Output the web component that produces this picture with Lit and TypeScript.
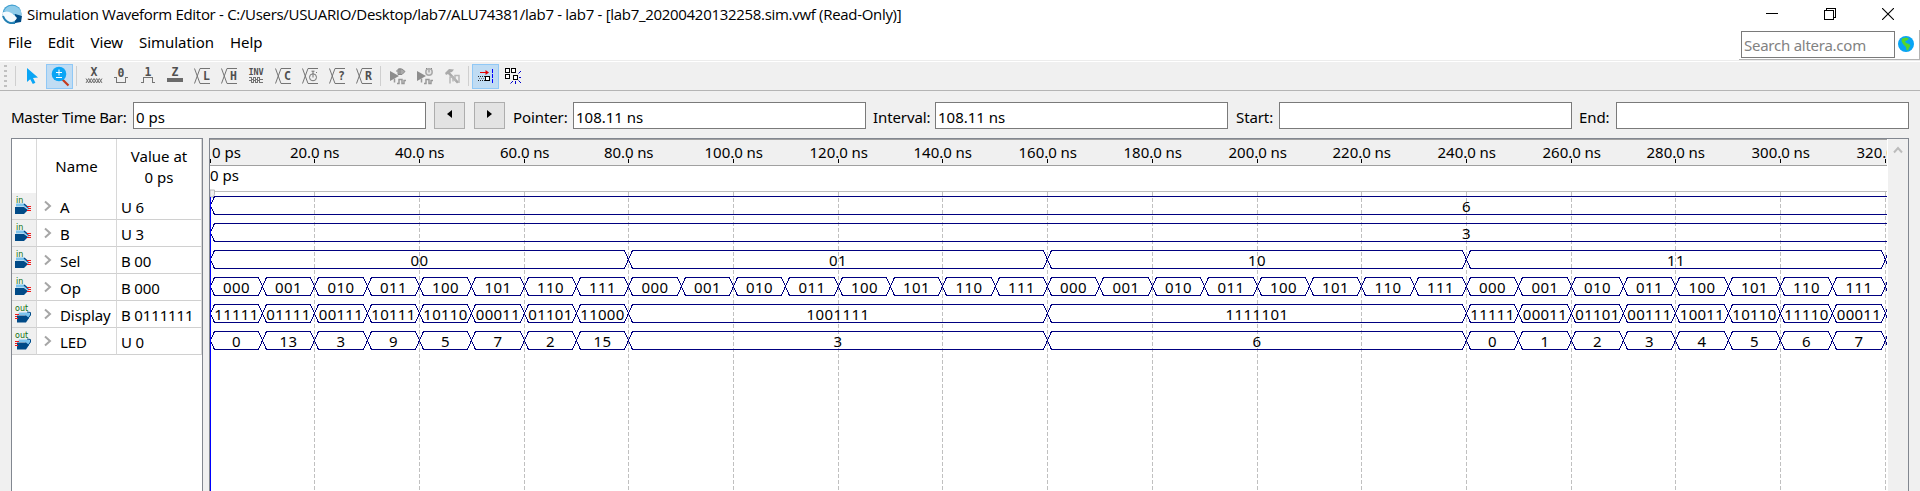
import { LitElement, html, svg, css } from "lit";
import { customElement, property } from "lit/decorators.js";

const STEP = 52.35;
const px = (k: number) => Math.floor(k * STEP);
const bits = ["000", "001", "010", "011", "100", "101", "110", "111"];

type Seg = [number, number, string];
interface Signal { name: string; value: string; dir: "in" | "out"; segs: Seg[]; }
const unit = (start: number, labels: string[]): Seg[] => labels.map((l, i) => [start + i, start + i + 1, l]);

const signals: Signal[] = [
  { name: "A", value: "U 6", dir: "in", segs: [[0, 48, "6"]] },
  { name: "B", value: "U 3", dir: "in", segs: [[0, 48, "3"]] },
  { name: "Sel", value: "B 00", dir: "in", segs: [[0, 8, "00"], [8, 16, "01"], [16, 24, "10"], [24, 32, "11"]] },
  { name: "Op", value: "B 000", dir: "in", segs: unit(0, [...bits, ...bits, ...bits, ...bits]) },
  {
    name: "Display", value: "B 0111111", dir: "out", segs: [
      ...unit(0, ["11111", "01111", "00111", "10111", "10110", "00011", "01101", "11000"]),
      [8, 16, "1001111"], [16, 24, "1111101"],
      ...unit(24, ["11111", "00011", "01101", "00111", "10011", "10110", "11110", "00011"])],
  },
  {
    name: "LED", value: "U 0", dir: "out", segs: [
      ...unit(0, ["0", "13", "3", "9", "5", "7", "2", "15"]),
      [8, 16, "3"], [16, 24, "6"],
      ...unit(24, ["0", "1", "2", "3", "4", "5", "6", "7"])],
  },
];

const bus = svg`<path class="ln" d="M.5 .5 L6 15.5 H16 M.5 15.5 L6 .5 H16"/>`;
const letter = (c: string) => svg`${bus}<text class="g" x="12.4" y="12.2" text-anchor="middle">${c}</text>`;
const play = svg`<path d="M0 3 L9 8 L0 13Z" fill="#8d8d8d"/><path d="M4.5 14.5 V10.5 M7 15.5 H9 V11.5 H12 V15.5 H14 V12.5 H16" fill="none" stroke="#999" stroke-width="1.5"/>`;

const icons: Record<string, unknown> = {
  pointer: svg`<path d="M3 0 V14 L6.2 11.2 L8.8 16 L11.4 14.7 L9 10 L14 9.6Z" fill="#0aa5f5"/>`,
  zoom: svg`<path d="M10 11 L16.5 17.5" stroke="#c43a1c" stroke-width="2.2"/><circle cx="7" cy="6" r="7.3" fill="#0aa5f5"/><path d="M4 4.5 H10 M7 1.5 V7.5 M4 9.5 H10" stroke="#fff" stroke-width="1" fill="none"/>`,
  x: svg`<text class="g" x="8" y="8" text-anchor="middle">X</text><path class="ln" d="M0 10.5 L2.7 15 L5.3 10.5 L8 15 L10.7 10.5 L13.3 15 L16 10.5 M0 15 L2.7 10.5 L5.3 15 L8 10.5 L10.7 15 L13.3 10.5 L16 15"/>`,
  zero: svg`<text class="g" x="8" y="9" text-anchor="middle">0</text><path class="ln c" d="M1 9.5 H3.5 V14.5 H12.5 V9.5 H15"/>`,
  one: svg`<text class="g" x="8" y="8" text-anchor="middle">1</text><path class="ln c" d="M1 14.5 H3.5 V9.5 H12.5 V14.5 H15"/>`,
  z: svg`<text class="g" x="8" y="8" text-anchor="middle">Z</text><rect x="0" y="10" width="16" height="4" fill="#6b6b6b"/>`,
  l: letter("L"), h: letter("H"), c: letter("C"), q: letter("?"), r: letter("R"),
  inv: svg`<text class="g s" x="8" y="6.5" text-anchor="middle" textLength="15">INV</text><path class="ln c" d="M1 9.5 H3.5 V11.5 H5.5 V9.5 H7.5 V11.5 H9.5 V9.5 H11.5 V11.5 H14.5 M1 12.5 H3.5 V14.5 H5.5 V12.5 H7.5 V14.5 H9.5 V12.5 H11.5 V14.5 H14.5"/>`,
  clock: svg`${bus}<circle cx="11" cy="9.3" r="3.5" class="ln"/><path class="ln" d="M9.5 3.2 H12.5 M11 3 V9.5 M14 5 L15 4"/>`,
  play1: svg`${play}<path d="M6 3 H8 M8 1 H12 L15 3.5 L12 6.5 H8Z M10 0 V6" fill="#aaa" stroke="#888"/>`,
  play2: svg`${play}<circle cx="12" cy="4" r="3.2" fill="#e6e6e6" stroke="#aaa" stroke-width="1.5"/><path d="M12 1.5 V4.5 M9 0 L10 1 M15 0 L14 1" stroke="#888"/>`,
  hammer: svg`<path d="M1 5 L5 1 L10 1.5 L8 4 L6 4.5 L15 14 L13 15.5 L4 6 L2 7Z" fill="#aaa"/><path d="M6 15.5 V9 H9 V13.5 M11 13 V7.5 H15 V15" fill="none" stroke="#b8b8b8" stroke-width="1.5"/>`,
  snap: svg`<path class="c" d="M2 4.5 H9" stroke="#e00000"/><path d="M7.5 2 L11 4.5 L7.5 7Z" fill="#e00000"/><path class="c" d="M0 8.5 H8 M0 12.5 H8" stroke="#222" stroke-dasharray="1 1"/><path class="c" d="M1 10.5 H8" stroke="#777" stroke-dasharray="1 1"/><rect class="c" x="7.5" y="8.5" width="4" height="4" fill="#fff" stroke="#000"/><path class="c" d="M14.5 1 V16" stroke="#00f" stroke-dasharray="4 1"/>`,
  grid: svg`<path class="c" d="M.5 .5 H4.5 V4.5 H.5Z M6.5 .5 H10.5 V4.5 H6.5Z M.5 6.5 H4.5 V10.5 H.5Z M8.5 7.5 H12.5 V11.5 H8.5Z" fill="#fff" stroke="#000"/><path d="M16 3 L13.5 5.5 M14 9.5 H16 M13.5 12.5 L16 15 M10.5 13 V16 M5.5 15.5 L8 13" stroke="#00c" fill="none"/>`,
};

@customElement("tool-icon")
class ToolIcon extends LitElement {
  @property() name = "";
  @property({ type: Boolean, reflect: true }) active = false;
  static styles = css`
    :host { box-sizing: border-box; display: flex; width: 27px; height: 25px; align-items: center; justify-content: center; border: 1px solid transparent; }
    :host([active]) { background: #c0dcf3; border-color: #90c8f6; }
    svg { display: block; width: 16px; height: 16px; overflow: visible; }
    .ln { fill: none; stroke: #747474; stroke-width: 1; }
    .c { shape-rendering: crispEdges; }
    .g { font: bold 11.5px "DejaVu Sans Mono", monospace; fill: #505050; }
    .s { font-size: 8.5px; }
  `;
  render() { return html`<svg viewBox="0 0 16 16">${icons[this.name]}</svg>`; }
}

@customElement("signal-list")
class SignalList extends LitElement {
  static styles = css`
    :host { box-sizing: border-box; display: block; width: 192px; background: #fff; border: solid #828790; border-width: 1px 1px 0; }
    .row { display: grid; grid-template-columns: 25px 80px 85px; height: 27px; }
    .head { height: 54px; line-height: 21px; text-align: center; }
    .row > div { box-sizing: border-box; border-right: 1px solid #d8d8d8; display: flex; align-items: center; white-space: nowrap; }
    .row:not(.head) > div { border-bottom: 1px solid #d0d0d0; }
    .head > div { justify-content: center; }
    .icon { background: #f0f0f0; padding-left: 3px; }
    .name { gap: 8px; padding-left: 7px; }
    .val { padding-left: 4px; }
    .row .hv, .row .hn { padding-top: 1px; }
    .pin { font: 8px "DejaVu Sans", sans-serif; fill: #107010; }
    svg { overflow: visible; display: block; }
    .t { padding-top: 1px; letter-spacing: -.08px; }
    .val .t { letter-spacing: -.15px; }
  `;
  pin(dir: string) {
    return dir === "in"
      ? svg`<text class="pin" x="1" y="5">in</text><path d="M1 5.5 H9 L14 9.5 V12 L9 8.5 H1Z" fill="#7cc4ee"/><path d="M0 9 H9 L13 12 L9 16 H0Z" fill="#004a87"/><path d="M9 6 L13 9.5" stroke="#004a87" stroke-width="1.3"/><path d="M12 8.5 H16 M13 10.5 H16 M12 12.5 H16" stroke="#f01818"/>`
      : svg`<text class="pin" x="0" y="5">out</text><path d="M4 6.5 H14 L16 9 L13 13 L10 9 H3Z" fill="#7cc4ee"/><path d="M2 9.5 H11 L14 12 L11 16.5 H2Z" fill="#004a87"/><path d="M12 6 L15.5 6.5 L15.5 9 L12.5 13" stroke="#004a87" fill="none"/><path d="M0 8.5 H4 M0 10.5 H2 M0 12.5 H3" stroke="#f01818"/>`;
  }
  render() {
    return html`
      <div class="row head"><div></div><div class="hn">Name</div><div class="hv">Value at<br>0 ps</div></div>
      ${signals.map(s => html`<div class="row">
        <div class="icon"><svg width="16" height="17">${this.pin(s.dir)}</svg></div>
        <div class="name"><svg width="8" height="11"><path d="M1 .5 L6 5 L1 9.5" fill="none" stroke="#a6a6a6" stroke-width="2"/></svg><span class="t">${s.name}</span></div>
        <div class="val"><span class="t">${s.value}</span></div>
      </div>`)}`;
  }
}

@customElement("wave-view")
class WaveView extends LitElement {
  static styles = css`
    :host { box-sizing: border-box; display: flex; flex: 1; background: #fff; border: solid #828790; border-width: 1px 1px 0; min-width: 0; }
    svg { display: block; flex: 1; }
    .bar { width: 20px; background: #f0f0f0; display: flex; justify-content: center; padding-top: 7px; }
    .bar svg { flex: none; }
    .crisp { shape-rendering: crispEdges; }
    .wave { fill: none; stroke: #000080; shape-rendering: crispEdges; }
    .grid { stroke: #c0c0c0; stroke-dasharray: 4 2; shape-rendering: crispEdges; }
    text { font-size: 15px; fill: #000; }
  `;
  wave(s: Signal, i: number) {
    const y = 57.5 + i * 27, b = y + 18;
    return s.segs.map(([from, to, label]) => {
      const l = px(from) + .5, r = px(to) + .5, long = label.length === 5;
      const w = label.length * 9 - (long ? 1 : .5);
      return svg`
        <path class="wave" d="M${l} ${y + 9} L${l + 4} ${y} H${r - 4} L${r} ${y + 9} L${r - 4} ${b} H${l + 4} Z"/>
        <text x=${(l + r) / 2 - .2} y=${y + 15.7} text-anchor="middle" textLength=${w}>${label}</text>`;
    });
  }
  render() {
    const ticks = Array.from({ length: 17 }, (_, i) => i);
    return html`
      <svg width="1678" height="352" viewBox="0 0 1678 352">
        <defs><clipPath id="plot"><rect width="1677" height="352"/></clipPath></defs>
        <g clip-path="url(#plot)">
          <rect width="1677" height="26" fill="#f0f0f0"/>
          <path class="crisp" d="M0 .5 H1677 M0 26.5 H1677" stroke="#a0a0a0"/>
          <path class="crisp" d="M4 52.5 H1677" stroke="#bdbdbd"/>
          ${ticks.map(i => {
            const x = px(i * 2) + .5;
            const label = i ? `${i * 20}.0 ns` : "0 ps";
            return svg`
              ${i ? svg`<path class="grid" d="M${x} 53 V352"/>` : null}
              <path class="crisp" d="M${x} 20 V24" stroke="#000"/>
              <text x=${i ? x + .3 : 2} y="19" text-anchor=${i ? "middle" : "start"} textLength=${i > 4 ? 58.5 : i ? 49.5 : 29}>${label}</text>`;
          })}
          <text x="0" y="42" textLength="29">0 ps</text>
          ${signals.map((s, i) => this.wave(s, i))}
          <path class="wave" d="${[2, 3, 4, 5].map(i => `M1677 ${62.5 + i * 27} L1675.5 ${66.5 + i * 27} L1677 ${70.5 + i * 27}`).join("")}"/>
          <path d="M0 51 H4.5 V55.5 L3 58 H0Z" fill="#f0f0f0" stroke="#aaa" stroke-width=".8"/>
          <path class="crisp" d="M.5 58 V352" stroke="#00f"/>
        </g>
      </svg>
      <div class="bar"><svg width="10" height="8"><path d="M1 6.5 L5 2 L9 6.5" fill="none" stroke="#bcbcbc" stroke-width="2"/></svg></div>`;
  }
}

@customElement("app-root")
class AppRoot extends LitElement {
  static styles = css`
    :host { display: flex; flex-direction: column; width: 1920px; height: 491px; overflow: hidden; background: #f0f0f0; color: #000; font: 15px/20px "Noto Sans", "Open Sans", sans-serif; }
    .title { height: 30px; background: #fff; display: flex; align-items: center; padding: 0 26px 2px 2px; box-sizing: border-box; }
    .title svg { display: block; }
    .caption { font-family: "Open Sans", "Noto Sans", sans-serif; margin-left: 5px; padding-bottom: 1px; letter-spacing: -.305px; flex: 1; white-space: nowrap; }
    .win { display: flex; gap: 46px; }
    .menu { height: 30px; background: #fff; display: flex; padding-left: 8px; gap: 16px; box-sizing: border-box; line-height: 25px; }
    .menu span { white-space: nowrap; letter-spacing: -.05px; }
    .search { margin-left: auto; box-sizing: border-box; width: 181px; height: 30px; display: flex; align-items: center; padding: 0 5px 1px 2px; justify-content: space-between; border: solid #b4b4b4; border-width: 0 1px 1px 0; }
    .box { box-sizing: border-box; width: 154px; height: 27px; border: 1px solid #7a7a7a; background: #fff; color: #828282; padding: 1px 2px 0; line-height: 24px; margin-top: 1px; white-space: nowrap; letter-spacing: -.25px; }
    .tools { box-sizing: border-box; height: 31px; border-top: 1px solid #ececec; border-bottom: 1px solid #b4b4b4; box-shadow: inset 0 1px #fff; display: flex; align-items: center; padding-left: 4px; padding-top: 1px; }
    .dots { width: 3px; height: 23px; background: repeating-linear-gradient(#c0c0c0 0 2px, transparent 2px 5px); }
    .sep { width: 1px; height: 20px; background: #cfcfcf; }
    .s1 { margin-left: 8px; } .s2 { margin: 0 3px; } .s3 { margin: 0 3px; }
    .ptr { margin-left: 1px; }
    .ptr.first { margin-left: 2px; }
    .times { display: flex; align-items: center; height: 47px; box-sizing: border-box; padding: 1px 0 0 11px; }
    .times span { display: block; box-sizing: border-box; white-space: nowrap; padding-top: 3px; letter-spacing: -.1px; }
    .field { box-sizing: border-box; width: 293px; height: 27px; border: 1px solid #7a7a7a; background: #fff; padding: 4px 3px 0 2px; line-height: 20px; }
    .btn { box-sizing: border-box; width: 31px; height: 27px; border: 1px solid #adadad; background: #e3e3e3; display: flex; align-items: center; justify-content: center; padding-bottom: 3px; }
    .b1 { margin: 0 9px 0 8px; }
    .times .w1 { width: 122px; letter-spacing: -.3px; } .w2 { width: 68px; padding-left: 8px; } .w3 { width: 69px; padding-left: 7px; } .w4 { width: 51px; padding-left: 8px; } .w5 { width: 44px; padding-left: 7px; }
    .main { flex: 1; display: flex; gap: 6px; padding: 0 11px 0 11px; min-height: 0; }
  `;
  render() {
    const tool = (n: string, active = false) => html`<tool-icon name=${n} ?active=${active}></tool-icon>`;
    return html`
      <div class="title">
        <svg width="20" height="20"><circle cx="10" cy="10" r="9.6" fill="#3f9fd0"/><path d="M2 7 C5 0 15 0 19 7 L19 13 L12 10Z" fill="#8ecbe9"/><path d="M13 10 L20 12 L19 18 L13 19Z" fill="#004c86"/><path d="M0 9 C5 6 10 8 15 14 C13 18 9 19 6 17 C3 15 1 12 0 9Z" fill="#f4fafd"/><path d="M1 12 C3 18 8 20 13 19" fill="none" stroke="#237fb2" stroke-width="2"/></svg>
        <div class="caption">Simulation Waveform Editor - C:/Users/USUARIO/Desktop/lab7/ALU74381/lab7 - lab7 - [lab7_20200420132258.sim.vwf (Read-Only)]</div>
        <div class="win">
          <svg width="12" height="12"><path d="M0 5.5 H12" stroke="#000" shape-rendering="crispEdges"/></svg>
          <svg width="12" height="12"><path d="M.5 2.5 H9.5 V11.5 H.5Z M2.5 2.5 V.5 H11.5 V9.5 H9.5" fill="none" stroke="#000" shape-rendering="crispEdges"/></svg>
          <svg width="12" height="12"><path d="M0 0 L12 12 M12 0 L0 12" stroke="#000" stroke-width="1.1"/></svg>
        </div>
      </div>
      <div class="menu">
        <span>File</span><span>Edit</span><span>View</span><span>Simulation</span><span>Help</span>
        <div class="search"><div class="box">Search altera.com</div>
          <svg width="16" height="16"><circle cx="8" cy="8" r="8" fill="#08a4f4"/><path d="M4 2.5 L8 1.5 L11 2.5 L9 4.5 L7 5 L8 7 L11 8 L12.5 9.5 L11 12 L10 14.5 L8.5 14 L8 11 L5 8 L3.5 5Z" fill="#55d52c"/></svg>
        </div>
      </div>
      <div class="tools">
        <div class="dots"></div><div class="sep s1"></div>
        <div class="ptr first">${tool("pointer")}</div><div class="ptr">${tool("zoom", true)}</div><div class="sep s2"></div>
        ${["x", "zero", "one", "z", "l", "h", "inv", "c", "clock", "q", "r"].map(n => tool(n))}
        <div class="sep s3"></div>${["play1", "play2", "hammer"].map(n => tool(n))}
        <div class="sep s3"></div>${tool("snap", true)}${tool("grid")}
      </div>
      <div class="times">
        <span class="w1">Master Time Bar:</span><div class="field">0 ps</div>
        <div class="btn b1"><svg width="5" height="8"><path d="M5 0 V8 L0 4Z"/></svg></div>
        <div class="btn"><svg width="5" height="8"><path d="M0 0 V8 L5 4Z"/></svg></div>
        <span class="w2">Pointer:</span><div class="field">108.11 ns</div>
        <span class="w3">Interval:</span><div class="field">108.11 ns</div>
        <span class="w4">Start:</span><div class="field"></div>
        <span class="w5">End:</span><div class="field"></div>
      </div>
      <div class="main"><signal-list></signal-list><wave-view></wave-view></div>`;
  }
}
